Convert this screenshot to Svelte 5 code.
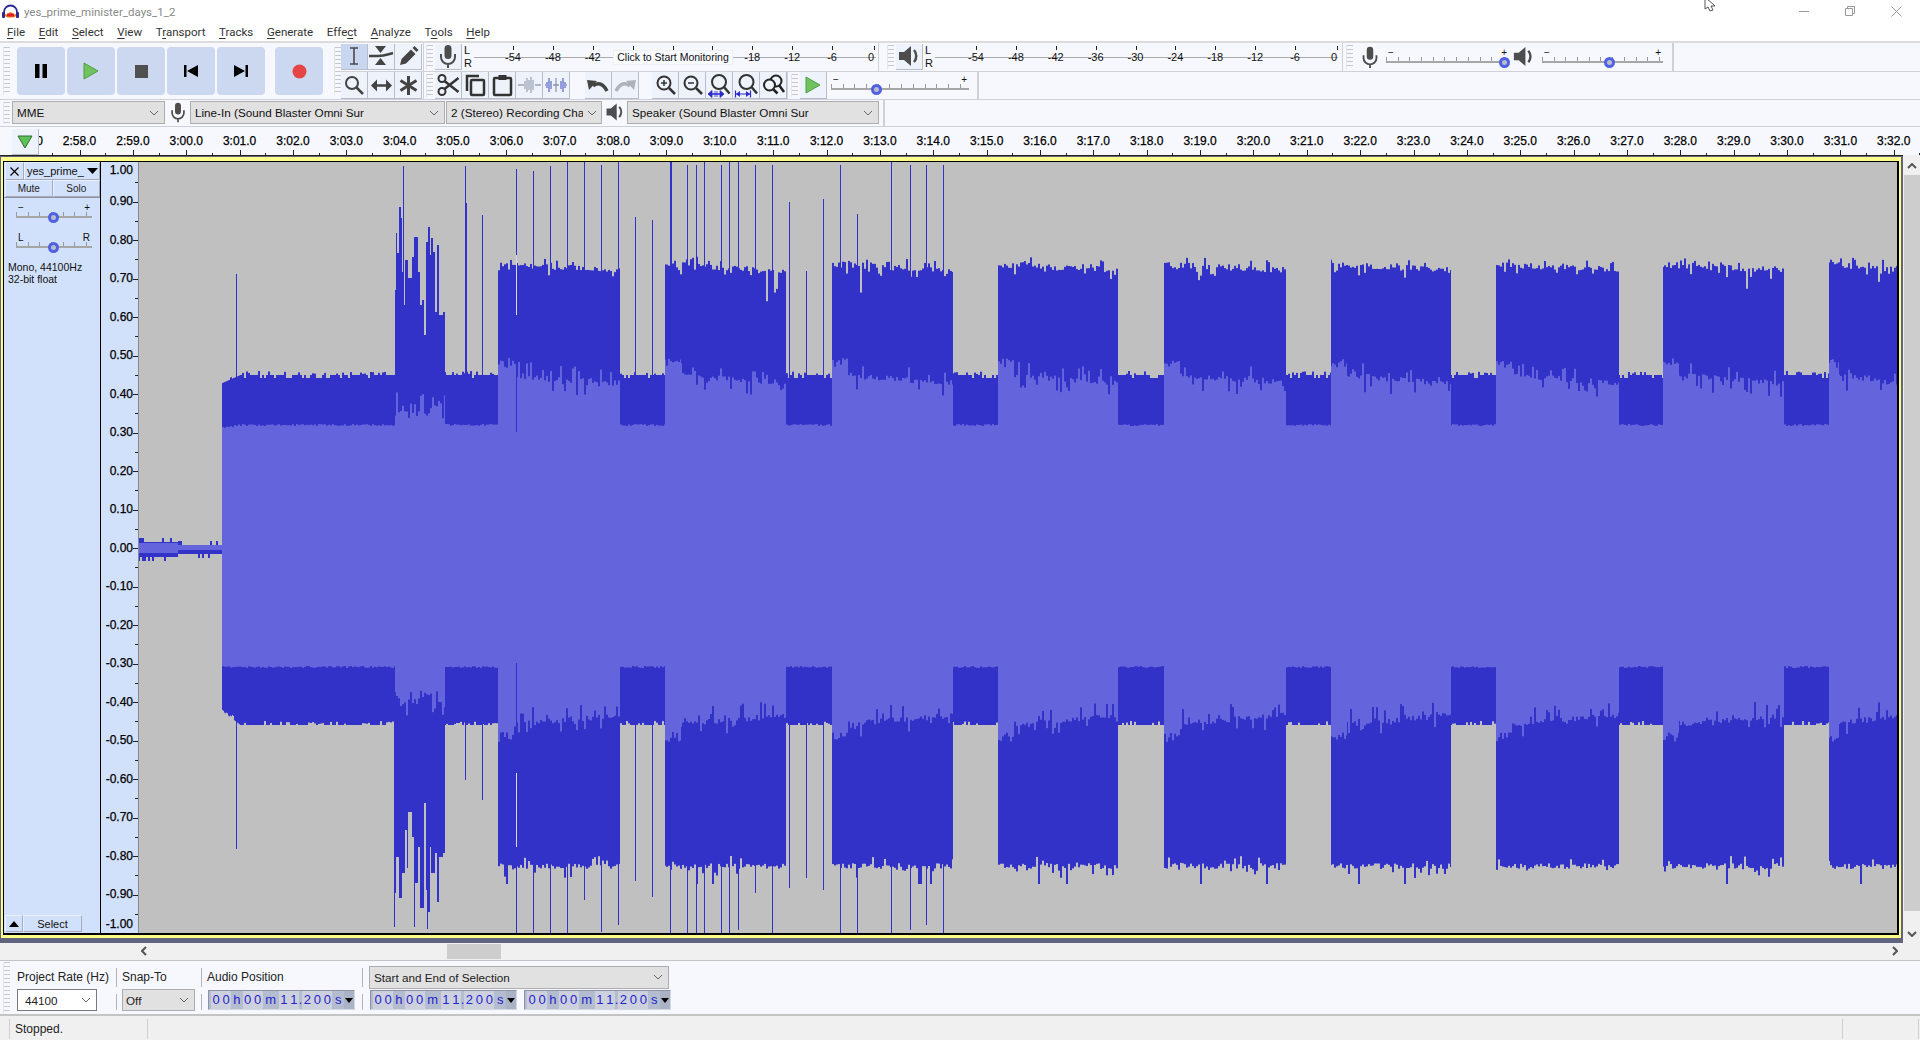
<script>
    import { onMount } from 'svelte';

    const menus = [
        ['', 'F', 'ile'], ['', 'E', 'dit'], ['', 'S', 'elect'], ['', 'V', 'iew'], ['T', 'r', 'ansport'], ['', 'T', 'racks'],
        ['', 'G', 'enerate'], ['Effe', 'c', 't'], ['', 'A', 'nalyze'], ['T', 'o', 'ols'], ['', 'H', 'elp']
    ];
    const meterLabels = ['-54', '-48', '-42', '-36', '-30', '-24', '-18', '-12', '-6'];

    // ruler labels, one every second
    let ticks = [];
    for (let s = 177; s <= 212; s++) {
        ticks.push(Math.floor(s / 60) + ':' + String(s % 60).padStart(2, '0') + '.0');
    }

    let scale = [];
    for (let i = 10; i >= -10; i--) {
        scale.push((i / 10).toFixed(2));
    }

    let canvas;

    // top / bottom outline of the noisy part just before the first loud block
    const burstTop = [[394,290],[396,233],[397,253],[399,207],[401,218],[402,272],[403,305],[405,260],[408,278],[412,257],[414,237],[416,237],[418,272],[420,305],[422,300],[424,335],[426,242],[428,227],[430,255],[431,238],[433,252],[435,312],[437,245],[439,315],[443,312],[445,372]];
    const burstBot = [[394,893],[396,857],[399,898],[402,873],[405,830],[407,868],[408,812],[412,837],[414,883],[418,847],[420,908],[424,803],[426,890],[428,912],[430,847],[431,873],[435,853],[437,902],[439,857],[443,853],[445,723]];

    const loud = [[498,620],[665,786],[832,953],[998,1118],[1164,1286],[1331,1451],[1496,1619],[1663,1784],[1829,1900]];

    // clicks: x, top y, bottom y
    const spikes = [
        [236,274,849],[394,400,927],[403,166,760],[414,400,927],[427,400,929],[465,166,780],[466,203,0],[482,215,800],[516,169,933],
        [533,171,933],[550,166,933],[567,162,933],[584,162,900],[601,165,932],[618,162,925],[635,217,881],[652,220,897],
        [670,162,933],[671,162,0],[687,165,933],[696,165,933],[704,162,933],[721,165,933],[729,162,933],[738,162,930],
        [755,165,893],[772,165,933],[789,202,888],[806,271,878],[823,199,890],[840,165,933],[857,214,933],[891,162,933],
        [910,165,930],[926,165,925],[943,165,933]
    ];

    function rng(seed) {
        return () => {
            seed = (seed + 0x6d2b79f5) | 0;
            let t = Math.imul(seed ^ (seed >>> 15), 1 | seed);
            t = (t + Math.imul(t ^ (t >>> 7), 61 | t)) ^ t;
            return ((t ^ (t >>> 14)) >>> 0) / 4294967296;
        };
    }

    function stepAt(table, x) {
        let y = table[0][1];
        for (const p of table) {
            if (p[0] <= x) y = p[1];
        }
        return y;
    }

    function drawWave() {
        const c = canvas.getContext('2d');
        const r = rng(1234);
        const X0 = 139, Y0 = 162;
        c.fillStyle = '#c0c0c0';
        c.fillRect(0, 0, 1758, 771);

        let hold = [0, 0, 0, 0];
        for (let x = X0; x < 1897; x++) {
            if (x % 2 == 0) hold = [r(), r(), r(), r()];
            const [a, b, d, e] = hold;
            let pt, pb, rt, rb;
            const seg = loud.find((s) => x >= s[0] && x < s[1]);

            if (x < 222) {
                const first = x < 178;
                pt = (first ? 542 : 545) - (a < 0.3 ? 4 : 0);
                pb = (first ? 557 : 554) + (b < 0.2 ? 4 : 0);
                rt = first ? 543 : 545;
                rb = first ? 553 : 550;
            } else if (x >= 395 && x < 445) {
                pt = stepAt(burstTop, x);
                pb = stepAt(burstBot, x);
                rt = 392 + a * 28;
                rb = 690 + b * 26;
            } else if (seg) {
                const t = (x - seg[0]) / (seg[1] - seg[0]);
                pt = 264 + t * 6 + (a < 0.15 ? -9 * b : a < 0.3 ? 10 * b : a > 0.97 ? 35 * b : (a - 0.6) * 9);
                pb = 866 + (b < 0.15 ? 12 * d : b < 0.25 ? -10 * d : b > 0.97 ? 18 : (b - 0.6) * 8);
                if (t < 0.13) {
                    rt = 358 + d * 10;
                    rb = 732 + e * 10;
                } else {
                    rt = 374 + t * 9 + (d < 0.2 ? -14 * e : d > 0.85 ? 16 * e : (d - 0.5) * 9);
                    rb = 725 - t * 10 + (e < 0.2 ? -16 * a : e > 0.85 ? 14 * a : (e - 0.5) * 9);
                }
            } else {
                const ramp = x < 240 ? (240 - x) / 18 : 0;
                pt = 374 + ramp * 8 + (a < 0.3 ? -3 * b : a > 0.85 ? 4 : 1);
                pb = 724 - ramp * 14 + (b < 0.3 ? -3 * d : 1);
                rt = 424 + ramp * 3 + d * 2;
                rb = 668 - e * 2;
            }

            for (const s of spikes) {
                if (s[0] == x) {
                    pt = Math.min(pt, s[1]);
                    pb = Math.max(pb, s[2]);
                }
            }

            c.fillStyle = '#3232c8';
            c.fillRect(x - X0, pt - Y0, 1, pb - pt);
            c.fillStyle = '#6464dc';
            c.fillRect(x - X0, rt - Y0, 1, rb - rt);
        }

        // the odd column with a light line through the dark band
        c.fillStyle = '#d8d8e4';
        c.fillRect(516 - X0, 255 - Y0, 1, 60);
        c.fillRect(516 - X0, 773 - Y0, 1, 74);
        c.fillStyle = '#3232c8';
        c.fillRect(516 - X0, 315 - Y0, 1, 117);
        c.fillRect(516 - X0, 663 - Y0, 1, 110);
    }

    onMount(drawWave);
</script>

{#snippet chevron()}
    <svg class="chev" width="10" height="6" viewBox="0 0 10 6"><path d="M1 1l4 4 4-4" fill="none" stroke="#666" stroke-width="1" /></svg>
{/snippet}

{#snippet mic(size)}
    <svg width={size} height={size} viewBox="0 0 26 26">
        <rect x="9.5" y="2" width="7" height="14" rx="3.5" fill="#4d4d4d" />
        <path d="M6 11v3a7 7 0 0 0 14 0v-3M13 21v4" fill="none" stroke="#4d4d4d" stroke-width="2" />
    </svg>
{/snippet}

{#snippet speaker(size)}
    <svg width={size} height={size} viewBox="0 0 26 26">
        <path d="M3 9h5l7-6v20l-7-6H3z" fill="#4d4d4d" />
        <path d="M18 7c3 3.500 3 8.500 0 12" fill="none" stroke="#4d4d4d" stroke-width="2.500" />
    </svg>
{/snippet}

{#snippet slider(width, pct, left, right)}
    <div class="slider" style="width:{width}px">
        <div class="slider-labels"><span>{left}</span><span>{right}</span></div>
        <div class="slider-track"><i class="thumb" style="left:{pct}%"></i></div>
    </div>
{/snippet}

{#snippet meter(width, pad)}
    <div class="lr"><span>L</span><span>R</span></div>
    <div class="meter" style="width:{width}px;padding-left:{pad}px">
        {#each meterLabels as m}
            <div class="mcell"><span>{m}</span></div>
        {/each}
        <div class="mcell last"><span>0</span></div>
    </div>
{/snippet}

{#snippet timebox()}
    <div class="time">
        <span class="cells"><b>0</b><b>0</b></span><b class="unit">h</b>
        <span class="cells"><b>0</b><b>0</b></span><b class="unit m">m</b>
        <span class="cells"><b>1</b><b>1</b></span><b class="dot">.</b>
        <span class="cells"><b>2</b><b>0</b><b>0</b></span><b class="unit">s</b>
        <span class="drop"><svg width="8" height="5" viewBox="0 0 8 5"><path d="M0 0h8L4 5z" fill="#000" /></svg></span>
    </div>
{/snippet}

<div class="app">
    <svg class="cursor" width="14" height="12" viewBox="0 0 14 12"><path d="M1 -3v12l3-2 2 4 3-1-2-4h4z" fill="#fff" stroke="#555" stroke-width="1" /></svg>

    <header class="titlebar">
        <svg width="17" height="15" viewBox="0 0 17 15" class="logo">
            <path d="M8.500 8c-2 0-2 2.500-3.500 2.500S3 10 3 10v2c2 2 9 2 11 0v-2s-.5.500-2 .5S10.500 8 8.500 8z" fill="#f08020" />
            <rect x="5" y="9.500" width="7" height="3" fill="#e02020" />
            <path d="M2 11V8a6.500 6.500 0 0 1 13 0v3" fill="none" stroke="#2a2a90" stroke-width="1.800" />
            <rect x="0" y="8" width="3" height="6" rx="1" fill="#2a2a90" />
            <rect x="14" y="8" width="3" height="6" rx="1" fill="#2a2a90" />
        </svg>
        <span class="title">yes_prime_minister_days_1_2</span>
        <div class="winctl">
            <span><svg width="10" height="10" viewBox="0 0 10 10"><path d="M0 5.500h10" stroke="#999" /></svg></span>
            <span><svg width="10" height="10" viewBox="0 0 10 10"><path d="M.5 2.500h7v7h-7zM2.500 2.500v-2h7v7h-2" fill="none" stroke="#999" /></svg></span>
            <span><svg width="11" height="11" viewBox="0 0 11 11"><path d="M.5.500l10 10M10.500.500l-10 10" stroke="#999" /></svg></span>
        </div>
    </header>

    <nav class="menubar">
        {#each menus as m}
            <span>{m[0]}<u>{m[1]}</u>{m[2]}</span>
        {/each}
    </nav>

    <div class="dock">
        <div class="transport">
            <div class="grip big"></div>
            <button class="tp">
                <svg width="14" height="16" viewBox="0 0 14 16"><path d="M1 1h4.500v14H1zM8.500 1H13v14H8.500z" fill="#000" /></svg>
            </button>
            <button class="tp">
                <svg width="16" height="18" viewBox="0 0 16 18"><path d="M1 1l14 8-14 8z" fill="#6fc25e" stroke="#4f9f45" /></svg>
            </button>
            <button class="tp">
                <svg width="13" height="13" viewBox="0 0 13 13"><rect width="13" height="13" fill="#505050" /></svg>
            </button>
            <button class="tp">
                <svg width="14" height="12" viewBox="0 0 14 12"><path d="M0 0h2.500v12H0zM14 0v12L3 6z" fill="#000" /></svg>
            </button>
            <button class="tp">
                <svg width="14" height="12" viewBox="0 0 14 12"><path d="M14 0h-2.500v12H14zM0 0v12l11-6z" fill="#000" /></svg>
            </button>
            <button class="tp rec">
                <svg width="15" height="15" viewBox="0 0 15 15"><circle cx="7.500" cy="7.500" r="7" fill="#e64545" /></svg>
            </button>
            <div class="grip big last"></div>
        </div>

        <div class="rows">
            <div class="row">
                <div class="tb on">
                    <svg width="26" height="26" viewBox="0 0 26 26"><path d="M9 5h8M13 5v16M9 21h8" fill="none" stroke="#4a4a4a" stroke-width="1.600" /></svg>
                </div>
                <div class="tb">
                    <svg width="26" height="26" viewBox="0 0 26 26">
                        <path d="M7 3h11l-5.500 7zM7 22h11l-5.500-7z" fill="#444" />
                        <path d="M1 13h9c6 0 8-1 15-3" fill="none" stroke="#444" stroke-width="2.500" />
                    </svg>
                </div>
                <div class="tb">
                    <svg width="26" height="26" viewBox="0 0 26 26"><path d="M5 22l1.500-6L16 6.500l4.500 4.500-9.500 9.500zM17.500 5l2-2 4 4-2 2z" fill="#444" /></svg>
                </div>
                <div class="gap-grip"><div class="grip"></div></div>
                <div class="tb">{@render mic(26)}</div>
                {@render meter(402, 19)}
                <div class="monitor">Click to Start Monitoring</div>
                <div class="gap-grip second"><div class="grip"></div></div>
                <div class="tb">{@render speaker(26)}</div>
                {@render meter(403, 21)}
                <div class="gap-grip third"><div class="grip"></div></div>
                <div class="vol-icon">{@render mic(24)}</div>
                {@render slider(123, 96.500, '−', '+')}
                <div class="vol-icon spk">{@render speaker(25)}</div>
                {@render slider(121, 56, '−', '+')}
                <div class="end-sep wide"></div>
            </div>

            <div class="row">
                <div class="tb">
                    <svg width="26" height="26" viewBox="0 0 26 26"><circle cx="11" cy="11" r="6" fill="none" stroke="#444" stroke-width="2" /><path d="M15.500 15.500l6.500 6.500" stroke="#444" stroke-width="2.500" /></svg>
                </div>
                <div class="tb">
                    <svg width="26" height="26" viewBox="0 0 26 26"><path d="M7 13.500h12" stroke="#444" stroke-width="2.500" /><path d="M3 13.500l6-6v12zM24 13.500l-6-6v12z" fill="#444" /></svg>
                </div>
                <div class="tb">
                    <svg width="26" height="26" viewBox="0 0 26 26"><path d="M13.500 4v19M5.500 8.500l16 10M21.500 8.500l-16 10" stroke="#444" stroke-width="3" /></svg>
                </div>
                <div class="gap-grip"><div class="grip"></div></div>
                <div class="tb">
                    <svg width="26" height="26" viewBox="0 0 26 26"><circle cx="7" cy="6.500" r="3.500" fill="none" stroke="#333" stroke-width="2" /><circle cx="7" cy="19.500" r="3.500" fill="none" stroke="#333" stroke-width="2" /><path d="M9.500 9l14 11M9.500 17l14-11" stroke="#333" stroke-width="2.500" /></svg>
                </div>
                <div class="tb">
                    <svg width="26" height="26" viewBox="0 0 26 26"><rect x="9" y="8" width="13" height="15" rx="1" fill="none" stroke="#333" stroke-width="2.500" /><path d="M5 19V4h12" fill="none" stroke="#333" stroke-width="2.500" /></svg>
                </div>
                <div class="tb">
                    <svg width="26" height="26" viewBox="0 0 26 26"><rect x="5" y="6" width="17" height="17" rx="1" fill="none" stroke="#333" stroke-width="2.500" /><rect x="9.500" y="3" width="8" height="5" fill="#333" /></svg>
                </div>
                <div class="tb">
                    <svg width="26" height="26" viewBox="0 0 26 26"><path d="M2 13h6M19 13h6" stroke="#9aa2b4" stroke-width="1.500" /><path d="M9 9v8M11 6v14M13 8v10M15 5v16M17 8v10" stroke="#9aa2b4" stroke-width="1.200" /></svg>
                </div>
                <div class="tb">
                    <svg width="26" height="26" viewBox="0 0 26 26"><path d="M10 13h6" stroke="#8a90a8" stroke-width="1.500" /><path d="M2 13h1M23 13h1" stroke="#5a66c8" /><path d="M4 10v6M6 6v14M8 9v8M18 9v8M20 6v14M22 10v6" stroke="#5a66c8" stroke-width="1.200" /><path d="M13 6v14" stroke="#8a90a8" stroke-width="1.200" /></svg>
                </div>
                <div class="tb undo">
                    <svg width="26" height="26" viewBox="0 0 26 26"><path d="M8 14c4-4 10-3 14 5" fill="none" stroke="#444" stroke-width="3.500" /><path d="M2 8l10 1-8 9z" fill="#444" /></svg>
                </div>
                <div class="tb">
                    <svg width="26" height="26" viewBox="0 0 26 26"><path d="M18 14c-4-4-10-3-14 5" fill="none" stroke="#aeb2ba" stroke-width="3.500" /><path d="M24 8l-10 1 8 9z" fill="#aeb2ba" /></svg>
                </div>
                <div class="tb zoom1">
                    <svg width="26" height="26" viewBox="0 0 26 26"><circle cx="12" cy="11" r="6.500" fill="none" stroke="#333" stroke-width="2" /><path d="M12 8v6M9 11h6" stroke="#333" stroke-width="1.500" /><path d="M17 16l6 6" stroke="#333" stroke-width="2.500" /></svg>
                </div>
                <div class="tb">
                    <svg width="26" height="26" viewBox="0 0 26 26"><circle cx="12" cy="11" r="6.500" fill="none" stroke="#333" stroke-width="2" /><path d="M9 11h6" stroke="#333" stroke-width="1.500" /><path d="M17 16l6 6" stroke="#333" stroke-width="2.500" /></svg>
                </div>
                <div class="tb">
                    <svg width="26" height="26" viewBox="0 0 26 26"><circle cx="13" cy="10" r="7" fill="none" stroke="#333" stroke-width="2" /><path d="M18 15l5.500 6.500" stroke="#333" stroke-width="2.500" /><path d="M5 22h10" stroke="#2a2ac8" stroke-width="1.500" /><path d="M2 22l4-3.500v7zM18 22l-4-3.500v7zM9 19v6M11 19v6" fill="#2a2ac8" stroke="#2a2ac8" stroke-width=".8" /></svg>
                </div>
                <div class="tb">
                    <svg width="26" height="26" viewBox="0 0 26 26"><circle cx="13.500" cy="10" r="7" fill="none" stroke="#333" stroke-width="2" /><path d="M18.500 15l5.500 6.500" stroke="#333" stroke-width="2.500" /><path d="M2.500 22h15M2.500 18.500v7M17.500 18.500v7" stroke="#2a2ac8" stroke-width="1.200" /><path d="M3 22l4-3v6zM17 22l-4-3v6z" fill="#2a2ac8" /></svg>
                </div>
                <div class="tb">
                    <svg width="26" height="26" viewBox="0 0 26 26"><circle cx="16" cy="9" r="5.500" fill="none" stroke="#222" stroke-width="2" /><circle cx="9.500" cy="13" r="5.500" fill="#f0f4fc" stroke="#222" stroke-width="2" /><path d="M13.500 17.500l4 4M19 13l5 7" stroke="#222" stroke-width="2.500" /></svg>
                </div>
                <div class="gap-grip small"><div class="grip"></div></div>
                <div class="tb">
                    <svg width="26" height="26" viewBox="0 0 26 26"><path d="M6 5l14 8-14 8z" fill="#6fc25e" stroke="#4f9f45" /></svg>
                </div>
                <div class="play-slider">{@render slider(138, 33, '−', '+')}</div>
                <div class="end-sep"></div>
            </div>
        </div>
    </div>

    <div class="devices">
        <div class="grip"></div>
        <div class="combo mme"><span>MME</span>{@render chevron()}</div>
        <div class="dev-icon">{@render mic(22)}</div>
        <div class="combo input"><span>Line-In (Sound Blaster Omni Sur</span>{@render chevron()}</div>
        <div class="combo channels"><span>2 (Stereo) Recording Channels</span>{@render chevron()}</div>
        <div class="dev-icon">{@render speaker(22)}</div>
        <div class="combo output"><span>Speaker (Sound Blaster Omni Sur</span>{@render chevron()}</div>
        <div class="end-sep"></div>
    </div>

    <div class="ruler">
        {#each ticks as t}
            <div class="rcell">{t}</div>
        {/each}
        <div class="ruler-left">
            <div class="pin">
                <svg width="16" height="14" viewBox="0 0 16 14"><path d="M1 1h14L8 13z" fill="#5fc15a" stroke="#2f6f30" /></svg>
            </div>
        </div>
    </div>

    <div class="workspace">
        <div class="frame">
            <div class="focus">
                <div class="track">
                    <div class="panel">
                        <div class="phead">
                            <div class="pbtn close">
                                <svg width="9" height="9" viewBox="0 0 9 9"><path d="M.5.500l8 8M8.500.500l-8 8" stroke="#000" stroke-width="1.200" /></svg>
                            </div>
                            <div class="pbtn name"><span>yes_prime_</span><svg width="11" height="6" viewBox="0 0 11 6"><path d="M0 0h11L5.500 6z" fill="#000" /></svg></div>
                        </div>
                        <div class="phead second">
                            <div class="pbtn half">Mute</div>
                            <div class="pbtn half">Solo</div>
                        </div>
                        <div class="psliders">
                            {@render slider(76, 48.700, '−', '+')}
                            <div class="pan">{@render slider(76, 48.700, 'L', 'R')}</div>
                        </div>
                        <div class="pinfo">Mono, 44100Hz<br />32-bit float</div>
                        <div class="pfoot">
                            <div class="pbtn up"><svg width="10" height="6" viewBox="0 0 10 6"><path d="M0 6h10L5 0z" fill="#000" /></svg></div>
                            <div class="pbtn select">Select</div>
                        </div>
                    </div>
                    <div class="vruler">
                        {#each scale as s, i}
                            <div class="vrow" class:first={i == 0} class:final={i == 20}><span>{s}</span></div>
                        {/each}
                    </div>
                    <canvas bind:this={canvas} width="1758" height="771"></canvas>
                </div>
            </div>
        </div>
        <div class="vscroll">
            <svg width="10" height="6" viewBox="0 0 10 6"><path d="M1 5l4-4 4 4" fill="none" stroke="#555" stroke-width="2" /></svg>
            <div class="vthumb"></div>
            <svg width="10" height="6" viewBox="0 0 10 6"><path d="M1 1l4 4 4-4" fill="none" stroke="#555" stroke-width="2" /></svg>
        </div>
    </div>

    <div class="hscroll">
        <svg width="6" height="10" viewBox="0 0 6 10"><path d="M5 1L1 5l4 4" fill="none" stroke="#555" stroke-width="2" /></svg>
        <div class="hthumb"></div>
        <svg class="hright" width="6" height="10" viewBox="0 0 6 10"><path d="M1 1l4 4-4 4" fill="none" stroke="#555" stroke-width="2" /></svg>
    </div>

    <div class="selbar">
        <div class="grip tall"></div>
        <div class="selgrid">
            <div class="cell">Project Rate (Hz)</div>
            <div class="cell sep">Snap-To</div>
            <div class="cell sep">Audio Position</div>
            <div class="cell sep"><div class="combo selmode"><span>Start and End of Selection</span>{@render chevron()}</div></div>

            <div class="cell lower"><div class="combo rate"><span>44100</span>{@render chevron()}</div></div>
            <div class="cell lower sep"><div class="combo snap"><span>Off</span>{@render chevron()}</div></div>
            <div class="cell lower sep">{@render timebox()}</div>
            <div class="cell lower sep times">{@render timebox()}{@render timebox()}</div>
        </div>
    </div>

    <footer class="status">
        <div class="st first">Stopped.</div>
        <div class="st fill"></div>
        <div class="st small"></div>
    </footer>
</div>

<style>
    :global(body) {
        margin: 0;
        background: #fff;
    }
    * {
        box-sizing: border-box;
    }
    .app {
        position: relative;
        width: 1920px;
        height: 1040px;
        overflow: hidden;
        font-family: "Liberation Sans", Arial, sans-serif;
        font-size: 12px;
        color: #111;
        background: #fff;
    }
    .cursor {
        position: absolute;
        left: 1704px;
        top: 0;
    }

    /* window chrome */
    .titlebar {
        height: 22px;
        display: flex;
        align-items: center;
        padding-left: 2px;
    }
    .logo {
        margin-right: 5px;
        margin-top: 1px;
    }
    .title {
        font-family: Roboto, sans-serif;
        font-size: 11.500px;
        color: #8a8a8a;
        margin-top: 2px;
    }
    .winctl {
        margin-left: auto;
        display: flex;
        padding-right: 1px;
    }
    .winctl span {
        width: 46px;
        display: flex;
        justify-content: center;
    }
    .menubar {
        height: 19px;
        display: flex;
        align-items: center;
        gap: 13.700px;
        padding-left: 7px;
        padding-top: 1px;
        font-family: Roboto, sans-serif;
        font-size: 11.500px;
        color: #333;
    }
    .menubar u {
        text-underline-offset: 2px;
    }

    /* toolbars */
    .dock {
        display: flex;
        height: 59px;
        background: #f6f8fe;
        border-top: 2px solid #dcdcdc;
    }
    .transport {
        width: 340px;
        height: 57px;
        flex: none;
        display: flex;
        padding: 4px 0 0 3px;
        border-bottom: 1px solid #cfd1da;
    }
    .grip {
        width: 7px;
        flex: none;
        align-self: stretch;
        margin: 2px 0;
        border-left: 1px solid #e4e6ee;
        background: repeating-linear-gradient(to bottom, #c6c8d0 0 1px, transparent 1px 4px);
    }
    .grip.big {
        height: 48px;
        align-self: flex-start;
        margin: 0 7px 0 0;
    }
    .grip.big.last {
        margin: 0 0 0 9px;
    }
    .tp {
        width: 48px;
        height: 48px;
        flex: none;
        margin-right: 2px;
        padding: 0;
        border: 0;
        border-radius: 4px;
        background: #cbd8f0;
        display: flex;
        align-items: center;
        justify-content: center;
    }
    .tp.rec {
        margin-left: 8px;
    }
    .rows {
        flex: 1;
        min-width: 0;
    }
    .row {
        position: relative;
        height: 28.500px;
        display: flex;
        border-bottom: 1px solid #cfd1da;
    }
    .row > .tb:first-child {
        margin-left: 1px;
    }
    .tb {
        width: 27px;
        height: 26.500px;
        margin-top: 0.500px;
        flex: none;
        display: flex;
        align-items: center;
        justify-content: center;
        background: #eef2fb;
        border-right: 1px solid #b9bdca;
        border-bottom: 1px solid #b9bdca;
    }
    .tb.on {
        background: #c8d6ef;
    }
    .tb.undo {
        margin-left: 15px;
    }
    .tb.zoom1 {
        margin-left: 13px;
    }
    .gap-grip {
        width: 12px;
        flex: none;
        display: flex;
        justify-content: center;
        padding: 0 2px;
        border-left: 1px solid #cfd1da;
        margin-left: 1px;
    }
    .gap-grip.second {
        width: 18px;
        margin-left: 2px;
        padding-left: 4px;
        justify-content: flex-end;
    }
    .gap-grip.third {
        width: 16px;
        margin-left: 4px;
        justify-content: flex-start;
        padding-left: 3px;
    }
    .gap-grip.small {
        width: 13px;
        margin-left: 0;
    }
    .lr {
        width: 12px;
        flex: none;
        display: flex;
        flex-direction: column;
        justify-content: space-between;
        padding: 1px 0 1px 2px;
        font-size: 11px;
        line-height: 13px;
    }
    .meter {
        position: relative;
        height: 28px;
        flex: none;
        display: flex;
        overflow: hidden;
        background: linear-gradient(#aaa, #aaa) 0 14px / 100% 1px no-repeat;
    }
    .mcell {
        position: relative;
        width: 39.900px;
        flex: none;
        text-align: center;
        font-size: 11px;
        line-height: 28px;
        color: #111;
    }
    .mcell::before {
        content: "";
        position: absolute;
        left: 50%;
        top: 3px;
        width: 1px;
        height: 4px;
        background: #222;
    }
    .mcell.last {
        width: 23px;
        text-align: right;
        padding-right: 1px;
    }
    .mcell.last::before {
        left: auto;
        right: 0;
    }
    .monitor {
        position: absolute;
        left: 273px;
        top: 7px;
        width: 120px;
        height: 15px;
        background: #fafbff;
        border: 1px solid #eef0f8;
        font-size: 10.500px;
        line-height: 13px;
        text-align: center;
        white-space: nowrap;
    }
    .vol-icon {
        width: 24px;
        flex: none;
        padding-top: 2px;
        margin-right: 4px;
    }
    .vol-icon.spk {
        margin: 0 6px 0 2px;
        padding-top: 1px;
        width: 25px;
    }
    .slider {
        flex: none;
        padding-top: 5px;
    }
    .slider-labels {
        display: flex;
        justify-content: space-between;
        height: 9px;
        padding: 0 2px;
        font-size: 10px;
        line-height: 9px;
    }
    .slider-track {
        position: relative;
        height: 6px;
        border-bottom: 2px solid #a6a6a6;
        background: repeating-linear-gradient(to right, #999 0 1px, transparent 1px 11.700px);
    }
    .thumb {
        position: absolute;
        top: 0;
        width: 11px;
        height: 11px;
        margin-left: -5.500px;
        border: 3px solid #4f60e4;
        border-radius: 50%;
        background: #b9bccb;
    }
    .end-sep {
        width: 2px;
        flex: none;
        margin-left: 8px;
        background: #cfd1da;
    }
    .end-sep.wide {
        margin-left: 9px;
    }
    .play-slider {
        margin-left: 4px;
        margin-top: -2px;
    }
    .devices {
        height: 27px;
        display: flex;
        align-items: flex-start;
        background: #f6f8fe;
        padding-left: 3px;
        border-bottom: 1px solid #cfd1da;
    }
    .devices .grip {
        margin: 2px 2px 2px 0;
    }
    .devices .end-sep {
        align-self: stretch;
        margin-left: 4px;
    }
    .combo {
        height: 23px;
        margin-top: 1px;
        flex: none;
        display: flex;
        align-items: center;
        gap: 7px;
        padding: 0 5px 0 4px;
        background: #e1e1e1;
        border: 1px solid #adadad;
        white-space: nowrap;
        font-size: 11.700px;
    }
    .combo span {
        flex: 1;
        min-width: 0;
        overflow: hidden;
    }
    .chev {
        flex: none;
    }
    .mme { width: 153px; }
    .input { width: 255px; }
    .channels {
        width: 156px;
        margin-left: 1px;
        gap: 4px;
        padding-right: 4px;
    }
    .output { width: 252px; }
    .dev-icon {
        width: 25px;
        flex: none;
        display: flex;
        justify-content: center;
        margin-top: 1px;
    }

    /* time ruler */
    .ruler {
        position: relative;
        height: 28px;
        display: flex;
        margin-left: -0.500px;
        background: #f6f8fe;
        overflow: hidden;
    }
    .rcell {
        position: relative;
        width: 53.370px;
        flex: none;
        text-align: center;
        font-size: 12px;
        line-height: 14px;
        padding-top: 7px;
        white-space: nowrap;
        color: #000;
        -webkit-text-stroke: 0.250px #000;
    }
    .rcell::before {
        content: "";
        position: absolute;
        left: 50%;
        bottom: 0;
        width: 1px;
        height: 5px;
        background: #222;
    }
    .rcell::after {
        content: "";
        position: absolute;
        right: 0;
        bottom: 0;
        width: 1px;
        height: 2px;
        background: #222;
    }
    .ruler-left {
        position: absolute;
        left: 0;
        top: 0;
        bottom: 0;
        width: 39.500px;
        padding: 2px 0 0 12px;
        background: #f6f8fe;
    }
    .pin {
        width: 27px;
        height: 26px;
        display: flex;
        align-items: center;
        justify-content: center;
        background: #eef2fb;
        border-right: 1px solid #b9bdca;
        border-bottom: 1px solid #b9bdca;
    }

    /* track area */
    .workspace {
        height: 788px;
        display: flex;
        background: #f0f0f0;
    }
    .frame {
        width: 1903px;
        flex: none;
        padding: 1px 2px 5px 1px;
        background: #60647f;
        border-top: 1px solid #222;
    }
    .focus {
        height: 781px;
        border: solid #fdfd8a;
        border-width: 4px 2px 3px 2px;
    }
    .track {
        display: flex;
        height: 774px;
        background: #000;
        border: solid #000;
        border-width: 1px 2px 2px 1px;
    }
    .panel {
        width: 97px;
        flex: none;
        display: flex;
        flex-direction: column;
        background: #d2e1fb;
        border-right: 1px solid #000;
    }
    .phead {
        display: flex;
        padding-left: 1px;
    }
    .phead.second {
        border-bottom: 1px solid #8e92a2;
    }
    .pbtn {
        display: flex;
        align-items: center;
        justify-content: center;
        background: #d2e1fb;
        border-right: 1px solid #a6aaba;
        border-bottom: 1px solid #a6aaba;
        border-top: 1px solid #e8effd;
        border-left: 1px solid #e8effd;
        font-size: 10px;
    }
    .close {
        width: 19px;
        height: 18px;
    }
    .name {
        width: 76px;
        height: 18px;
        justify-content: space-between;
        padding: 0 1px 0 2px;
        font-size: 11px;
    }
    .half {
        width: 47.500px;
        height: 17px;
        color: #222;
    }
    .psliders {
        padding: 0 0 0 12px;
    }
    .pan {
        margin-top: 10px;
    }
    .pinfo {
        margin-top: 13px;
        padding-left: 4px;
        font-size: 10.500px;
        line-height: 12px;
        color: #111;
    }
    .pfoot {
        margin-top: auto;
        margin-bottom: 1px;
        display: flex;
        padding-left: 1px;
    }
    .up {
        width: 18px;
        height: 17px;
    }
    .select {
        width: 59px;
        height: 17px;
        font-size: 11px;
    }
    .vruler {
        width: 38px;
        flex: none;
        background: #d2e1fb;
        border-right: 1px solid #8a8a8a;
        overflow: hidden;
    }
    .vrow {
        position: relative;
        height: 38.500px;
        text-align: right;
        padding-right: 5px;
        line-height: 38.500px;
        font-size: 12px;
        color: #000;
        -webkit-text-stroke: 0.250px #000;
    }
    .vrow:first-child {
        margin-top: -18.250px;
    }
    .vrow span {
        display: inline-block;
    }
    .vrow.first span {
        transform: translateY(7px);
    }
    .vrow.final span {
        transform: translateY(-9px);
    }
    .vrow::before {
        content: "";
        position: absolute;
        right: 0;
        top: 50%;
        width: 5px;
        height: 1px;
        background: #222;
    }
    .vrow.first::before,
    .vrow.final::before {
        display: none;
    }
    .vrow::after {
        content: "";
        position: absolute;
        right: 0;
        top: 100%;
        width: 3px;
        height: 1px;
        background: #222;
    }
    canvas {
        display: block;
        flex: none;
        width: 1758px;
        height: 771px;
    }
    .vscroll {
        width: 16px;
        flex: none;
        margin-left: 1px;
        display: flex;
        flex-direction: column;
        align-items: center;
        padding-top: 8px;
        background: #f0f0f0;
    }
    .vthumb {
        width: 16px;
        height: 736px;
        margin: 6px 0 20px;
        background: #cdcdcd;
    }
    .hscroll {
        height: 17px;
        display: flex;
        align-items: center;
        padding-left: 141px;
        padding-bottom: 1px;
        background: #f0f0f0;
    }
    .hthumb {
        width: 54px;
        height: 15px;
        margin-left: 300px;
        background: #cdcdcd;
    }
    .hright {
        margin-left: 1391px;
    }

    /* selection bar */
    .selbar {
        height: 56px;
        display: flex;
        padding-left: 3px;
        background: #f6f8fe;
        border-top: 1px solid #c4c4c4;
        border-bottom: 2px solid #c4c4c4;
    }
    .grip.tall {
        margin: 1px 0 1px;
    }
    .selgrid {
        margin-left: 7px;
        display: grid;
        grid-template-columns: 99px 85px 161px 308px;
        grid-template-rows: 24px 26px;
        padding-top: 4px;
    }
    .cell {
        position: relative;
        display: flex;
        align-items: center;
        color: #222;
        white-space: nowrap;
    }
    .cell.lower {
        align-items: flex-start;
    }
    .cell.sep {
        padding-left: 6px;
    }
    .cell.sep::before {
        content: "";
        position: absolute;
        left: 0;
        top: 3px;
        bottom: 2px;
        width: 1px;
        background: #b4b4b4;
    }
    .cell.lower.sep::before {
        top: 5px;
        bottom: 5px;
    }
    .selbar .combo {
        margin-top: 0;
    }
    .selmode {
        width: 300px;
        height: 23px;
        margin-left: 1px;
    }
    .rate {
        width: 80px;
        height: 22px;
        background: #fff;
        border-color: #7a7a7a;
        padding-left: 7px;
    }
    .snap {
        width: 73px;
        height: 22px;
        padding-left: 3px;
    }
    .times {
        gap: 6px;
    }
    .cell.times {
        padding-left: 7px;
    }
    .time {
        width: 147px;
        height: 20px;
        margin-left: 1px;
        margin-top: 1px;
        flex: none;
        display: flex;
        align-items: stretch;
        background: #b4bccf;
        border: 1px solid #8c92a4;
        border-right-color: #d6d8e0;
        border-bottom-color: #d6d8e0;
        padding-left: 2px;
        font-size: 13px;
        line-height: 18px;
        color: #2424cc;
    }
    .time b {
        font-weight: 400;
        width: 10px;
        text-align: center;
    }
    .cells {
        display: flex;
        background: #cdd1de;
    }
    .time .unit {
        width: 13px;
    }
    .time .unit.m {
        width: 18px;
    }
    .time .dot {
        width: 4px;
    }
    .drop {
        margin-left: auto;
        width: 11px;
        display: flex;
        align-items: center;
        justify-content: center;
        background: #aab2c6;
    }
    .status {
        height: 24px;
        display: flex;
        background: #f0f0f0;
        padding: 3px 0 1px 9px;
    }
    .st {
        border-left: 1px solid #d0d0d0;
        padding-left: 5px;
        line-height: 20px;
        color: #222;
    }
    .st.first {
        width: 138px;
    }
    .st.fill {
        width: 1695px;
    }
    .st.small {
        width: 77px;
        border-right: 1px solid #d0d0d0;
    }
</style>
